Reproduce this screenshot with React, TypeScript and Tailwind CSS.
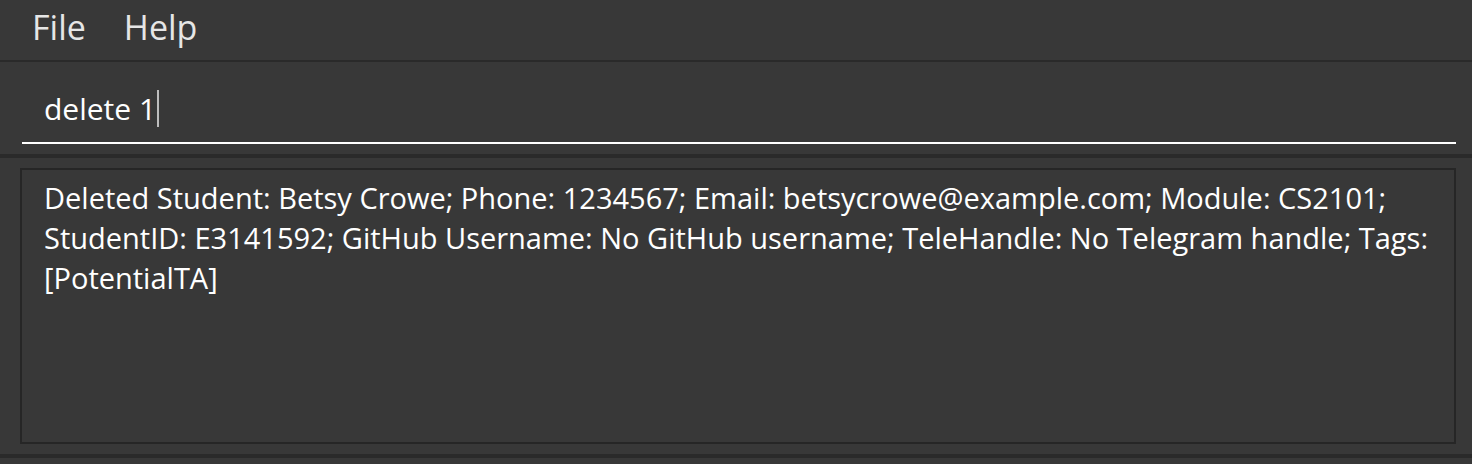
export default function App() {
  return (
    <div className="w-[1472px] h-[464px] bg-[#383838] flex flex-col overflow-hidden" style={{ fontFamily: "'Open Sans', 'Noto Sans', sans-serif" }}>
      {/* Menu bar */}
      <div className="h-[60px] flex items-center gap-[38px] pl-[32px] pb-[6px] text-[34px] text-[#e6e6e6]">
        <span>File</span>
        <span>Help</span>
      </div>
      <div className="h-[2px] bg-[#2a2a2a]" />

      {/* Command box */}
      <div className="h-[92px] pl-[22px] pr-[16px] pt-[10px] flex flex-col">
        <div className="h-[72px] flex items-center border-b-2 border-white pl-[22px] pt-[2px] text-[30px] text-white">
          <span>delete 1</span>
          <span className="ml-[1px] w-[2px] h-[37px] bg-[#bdbdbd]" />
        </div>
      </div>
      <div className="h-[4px] bg-[#2a2a2a]" />

      {/* Result display */}
      <div className="flex-1 pl-[20px] pr-[16px] pt-[10px] pb-[10px] flex">
        <div className="flex-1 border-2 border-[#262626] pl-[22px] pr-[10px] pt-[8px] text-[29px] leading-[40px] text-white whitespace-nowrap">
          Deleted Student: Betsy Crowe; Phone: 1234567; Email: betsycrowe@example.com; Module: CS2101;
          <br />
          StudentID: E3141592; GitHub Username: No GitHub username; TeleHandle: No Telegram handle; Tags:
          <br />
          [PotentialTA]
        </div>
      </div>
      <div className="h-[4px] bg-[#2a2a2a]" />
      <div className="h-[6px]" />
    </div>
  )
}
